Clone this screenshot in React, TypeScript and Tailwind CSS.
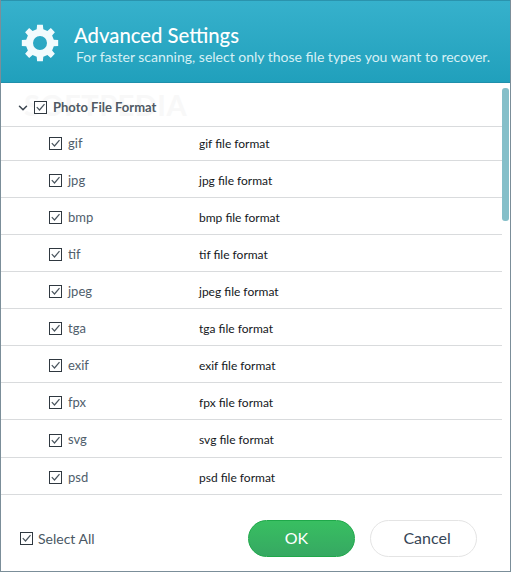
import { ChevronDown } from "lucide-react"

const formats = ["gif", "jpg", "bmp", "tif", "jpeg", "tga", "exif", "fpx", "svg", "psd"]

function gearPath() {
  const teeth = 8
  const pts: string[] = []
  for (let i = 0; i < teeth; i++) {
    const a = (i * Math.PI * 2) / teeth - Math.PI / 2
    const step = Math.PI / teeth
    const list: [number, number][] = [
      [14.2, a - step * 0.6],
      [18.4, a - step * 0.4],
      [18.4, a + step * 0.4],
      [14.2, a + step * 0.6],
    ]
    for (const [r, t] of list) {
      pts.push(`${(20 + r * Math.cos(t)).toFixed(2)} ${(20 + r * Math.sin(t)).toFixed(2)}`)
    }
  }
  return `M${pts.join("L")}Z M20 13a7 7 0 1 0 0 14a7 7 0 1 0 0-14Z`
}

function Check({ className = "" }: { className?: string }) {
  return (
    <span className={`flex h-[13px] w-[13px] shrink-0 items-center justify-center border border-[#2f3840] bg-white ${className}`}>
      <svg viewBox="0 0 11 11" className="h-[11px] w-[11px]" fill="none" stroke="#4a555e" strokeWidth="1.2">
        <path d="M1.8 5.2 4.5 8 9.5 2.2" />
      </svg>
    </span>
  )
}

export default function App() {
  return (
    <div className="flex h-[572px] w-[511px] flex-col overflow-hidden border border-t-0 border-[#7b8e99] bg-white font-['Lato',sans-serif]">
      <div className="flex h-[83px] shrink-0 items-center border-t border-b border-t-[#2a93ad] border-b-[#1f8fab] bg-gradient-to-b from-[#36b1cc] to-[#20a0bc] pl-[19px]">
        <svg viewBox="0 0 40 40" className="mt-[2px] h-[40px] w-[40px] shrink-0" fill="#f2fbfd" fillRule="evenodd">
          <path d={gearPath()} />
        </svg>
        <div className="ml-[14px] mt-[6px]">
          <div className="text-[20.3px] leading-[25px] font-medium text-white">Advanced Settings</div>
          <div className="ml-[2px] text-[14px] leading-[18px] whitespace-nowrap text-[#d6f0f5]">For faster scanning, select only those file types you want to recover.</div>
        </div>
      </div>

      <div className="relative flex-1">
        <div className="mr-[8px]">
          <div className="relative flex h-[44px] items-center border-b border-[#d9dbdd] pt-[6px] pl-[15px]">
            <span className="absolute top-[3px] left-[23px] text-[29px] leading-[38px] font-bold tracking-[0.5px] text-[#f8f8f8]">SOFTPEDIA</span>
            <ChevronDown size={14} strokeWidth={2.6} className="relative text-[#3c4650]" />
            <Check className="relative ml-[4px]" />
            <span className="relative ml-[6px] text-[13px] font-bold text-[#505a64]">Photo File Format</span>
          </div>
          {formats.map((f, i) => (
            <div key={f} className={`flex items-center border-b border-[#d9dbdd] pl-[48px] ${i === 0 ? "h-[34px]" : i === 8 ? "h-[38px] pt-[3px]" : "h-[37px] pt-[3px]"}`}>
              <Check />
              <span className="ml-[6px] w-[131px] text-[13px] text-[#505e6c]">{f}</span>
              <span className="text-[12px] text-[#14181c]">{f} file format</span>
            </div>
          ))}
        </div>
        <div className="absolute top-[5px] right-[1px] h-[133px] w-[7px] rounded-[3px] bg-[#85bfc9]" />
      </div>

      <div className="flex h-[77px] shrink-0 items-center border-b border-[#7b8e99] pt-[13px] pl-[19px]">
        <Check className="-mt-[2px]" />
        <span className="ml-[5px] -mt-[2px] text-[14px] text-[#4a5864]">Select All</span>
        <div className="ml-[153px] -mt-[3px] flex gap-[15px]">
          <button className="h-[37px] w-[107px] rounded-full border border-[#1fa84a] bg-gradient-to-b from-[#38bf61] to-[#36a862] pr-[9px] text-[16px] text-white">OK</button>
          <button className="h-[37px] w-[107px] rounded-full border border-[#e4e4e4] bg-white pl-[8px] text-[16px] text-[#364656]">Cancel</button>
        </div>
      </div>
    </div>
  )
}
